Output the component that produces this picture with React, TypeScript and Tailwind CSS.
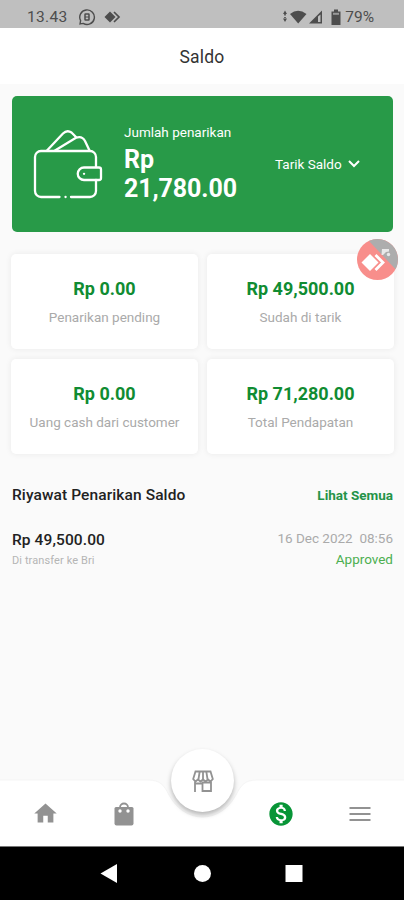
import React from "react";
import { MdHome, MdMonetizationOn } from "react-icons/md";

const stats = [
  { value: "Rp 0.00", label: "Penarikan pending" },
  { value: "Rp 49,500.00", label: "Sudah di tarik" },
  { value: "Rp 0.00", label: "Uang cash dari customer" },
  { value: "Rp 71,280.00", label: "Total Pendapatan" },
];

const StatusBar = () => (
  <div className="flex h-7 shrink-0 items-center justify-between bg-[#bfbfbf] pl-[27px] pr-[30px] pt-[5px] text-[#4d4d4d]">
    <div className="flex items-center">
      <span className="w-[41px] text-[15.5px] leading-4 tracking-[0.3px]">13.43</span>
      <svg className="ml-[10px]" width="18" height="18" viewBox="0 0 18 18" fill="none" stroke="currentColor">
        <path d="M2 16l.6-3.4A7.3 7.3 0 1 1 5.2 15.4L2 16z" strokeWidth="1.4" />
        <rect x="7" y="6" width="4" height="6" rx="0.5" strokeWidth="1.5" />
        <path d="M7 9h4" />
      </svg>
      <svg className="ml-[8px]" width="17" height="12" viewBox="0 0 17 12">
        <path d="M0.5 6L6 0.5 11.5 6 6 11.5z" fill="currentColor" />
        <path d="M10 1l5 5-5 5" fill="none" stroke="currentColor" strokeWidth="1.7" />
      </svg>
    </div>
    <div className="flex items-center">
      <svg width="41" height="18" viewBox="0 0 41 18" fill="currentColor">
        <path d="M0 6l2-3.5 2 3.5zM0 10.5l2 3.5 2-3.5zM1.2 5.5h1.6v2H1.200zM1.200 9h1.600v2H1.200z" />
        <path d="M7 6q8-6.500 16.500 0L15.200 15.500z" />
        <path d="M26 15.500L39 2.500v13z" />
        <path d="M35 8.500l2.500-2v7.500H35z" fill="#bfbfbf" />
      </svg>
      <svg width="10" height="16" viewBox="0 0 10 16" className="ml-[7px] mr-[4px]" fill="currentColor">
        <path d="M3 0.500h4v2h2.500V16h-9V2.500H3z" />
        <path d="M2 3.800h6v2H2z" fill="#999" />
      </svg>
      <span className="text-[15.5px] leading-4">79%</span>
    </div>
  </div>
);

const WalletIcon = () => (
  <svg
    width="70"
    height="72"
    viewBox="0 0 70 72"
    fill="none"
    stroke="white"
    strokeWidth="2.3"
    strokeLinecap="round"
    strokeLinejoin="round"
  >
    <path d="M26.500 69H8a6 6 0 0 1-6-6V29a6 6 0 0 1 6-6h49a6 6 0 0 1 6 6v10M63 52v11a6 6 0 0 1-6 6H38" />
    <path d="M14 22.500L30 5.500Q34 1.500 38.500 4.500L43 9" />
    <path d="M22 22.500L43 9.800Q49 7.500 52 13l4.500 9.500" />
    <path d="M66 39.500H51a6 6 0 0 0 0 12.500h15q2 0 2-2v-8.500q0-2-2-2z" />
    <path d="M32.500 69h.1M51 45.800h.1" />
  </svg>
);

const RemoteBadge = () => (
  <div className="absolute left-[357px] top-[239px] size-[41px]">
    <svg width="41" height="41" viewBox="0 0 41 41">
      <circle cx="20.5" cy="20.5" r="20.5" fill="#f88e8b" />
      <path d="M12 1.900A20.500 20.500 0 0 1 38.500 30.300z" fill="#adadad" />
      <path d="M4.500 23.500l8.500-8.500 8.500 8.500-8.500 8.500z" fill="white" />
      <path d="M18.500 16l7.500 7.500-7.500 7.500" fill="none" stroke="white" strokeWidth="2.8" />
      <path d="M25 10h7v2.500l-3 .5-3 3h-1.500z" fill="#e9e9e9" />
      <circle cx="31.500" cy="15.500" r="1.700" fill="#e9e9e9" />
    </svg>
  </div>
);

const StoreIcon = () => (
  <svg width="24" height="24" viewBox="0 0 24 24" fill="none" stroke="#929292" strokeWidth="1.8">
    <path d="M4.500 2.500h15l2.300 7.500-2.300 2.500-2.500-2-2.500 2-2.500-2-2.500 2-2.500-2-2.500 2L2.200 10z" />
    <path d="M8.700 2.500L7.500 10M12 2.500V10M15.300 2.500L16.500 10" />
    <path d="M4 12.500V23M3.500 14.500H12M11.500 13.500h8.500v8.500h-8.500z" />
  </svg>
);

const BagIcon = () => (
  <svg className="ml-[55px]" width="20" height="24" viewBox="0 0 20 24">
    <path d="M6 9V5.500a4 4 0 0 1 8 0V9" fill="none" stroke="currentColor" strokeWidth="1.8" />
    <path d="M2 5h16q1.500 0 1.500 1.500v15q0 2-2 2h-15q-2 0-2-2v-15Q.5 5 2 5z" fill="currentColor" />
    <circle cx="6" cy="9" r="1.7" fill="white" />
    <circle cx="14" cy="9" r="1.7" fill="white" />
  </svg>
);

const BottomNav = () => (
  <div className="relative h-[66px] shrink-0">
    <svg className="absolute -top-px left-0" width="404" height="67" viewBox="0 0 404 67">
      <path
        d="M-2 1h150c12 0 16 5 21 15C176 29 188 38 202.500 38S229 29 236 16c5-10 9-15 21-15h150v68H-2z"
        fill="white"
        stroke="#f5f5f5"
      />
    </svg>
    <div className="absolute -top-[31px] left-[171px] flex size-[63px] items-center justify-center rounded-full bg-white shadow-[0_3px_5px_rgba(0,0,0,0.28)]">
      <StoreIcon />
    </div>
    <div className="relative flex h-full items-center pl-[32px] pr-[33px] pt-px text-[#929292]">
      <MdHome size={27} />
      <BagIcon />
      <MdMonetizationOn size={28} className="ml-[133px] text-[#089537]" />
      <svg className="ml-auto" width="22" height="16" viewBox="0 0 22 16" stroke="currentColor" strokeWidth="2">
        <path d="M0.500 2h21M0.500 8h21M0.500 14h21" />
      </svg>
    </div>
  </div>
);

const App = () => {
  return (
    <div className="relative flex h-[900px] w-[404px] flex-col overflow-hidden bg-[#fafafa] font-['Roboto',sans-serif]">
      <StatusBar />
      <header className="flex h-14 shrink-0 items-center justify-center bg-white pt-[3px] text-[17.5px] tracking-[0.2px] text-[#333]">
        Saldo
      </header>

      <main className="flex-1 px-3 pt-3">
        <section className="flex h-[136px] w-[381px] items-center rounded-[5px] bg-[#289a48] pl-[21px] text-white">
          <WalletIcon />
          <div className="-mt-[2px] ml-[21px] w-[120px]">
            <p className="text-[13.5px] leading-4">Jumlah penarikan</p>
            <p className="mt-[5px] text-[25px] font-bold leading-[29px] tracking-[-0.1px]">Rp 21,780.00</p>
          </div>
          <div className="ml-[31px] flex items-center text-[13.5px]">
            <span className="w-[69px] whitespace-nowrap">Tarik Saldo</span>
            <svg className="ml-1" width="12" height="8" viewBox="0 0 12 8" fill="none" stroke="white" strokeWidth="2">
              <path d="M1 1l5 5 5-5" />
            </svg>
          </div>
        </section>

        <section className="-ml-px mt-[22px] grid w-[383px] grid-cols-2 gap-x-[9px] gap-y-[10px]">
          {stats.map((stat) => (
            <div
              key={stat.label}
              className="h-[95px] rounded-[5px] bg-white pt-[24px] text-center shadow-[0_0_6px_rgba(0,0,0,0.07)]"
            >
              <p className="text-lg font-bold leading-[21px] text-[#108c32]">{stat.value}</p>
              <p className="mt-[10px] text-[13.5px] leading-4 text-[#aaa]">{stat.label}</p>
            </div>
          ))}
        </section>

        <div className="mt-[31px] flex w-[381px] items-center justify-between">
          <h2 className="text-[15.5px] font-medium leading-5 tracking-[0.1px] text-[#222]">Riyawat Penarikan Saldo</h2>
          <span className="-mt-px text-[13.5px] font-bold leading-4 text-[#249348]">Lihat Semua</span>
        </div>
        <div className="mt-[25px] flex w-[381px] justify-between">
          <div>
            <p className="text-[15.5px] font-medium leading-5 tracking-[0.1px] text-[#222]">Rp 49,500.00</p>
            <p className="mt-[3px] text-[11px] leading-4 tracking-[0.1px] text-[#b5b5b5]">Di transfer ke Bri</p>
          </div>
          <div className="text-right text-[13.5px]">
            <p className="whitespace-pre leading-4 text-[#aaa]">16 Dec 2022  08:56</p>
            <p className="mt-[5px] leading-4 text-[#4caf50]">Approved</p>
          </div>
        </div>
      </main>

      <BottomNav />
      <div className="h-[54px] shrink-0 border-t border-[#777] bg-black">
        <svg width="404" height="53" viewBox="0 0 404 53" fill="white">
          <path d="M100.500 26.500l16.500-9.500v19z" />
          <circle cx="202.500" cy="26.500" r="8.500" />
          <path d="M285.500 18h17v17h-17z" />
        </svg>
      </div>
      <RemoteBadge />
    </div>
  );
};

export default App;
